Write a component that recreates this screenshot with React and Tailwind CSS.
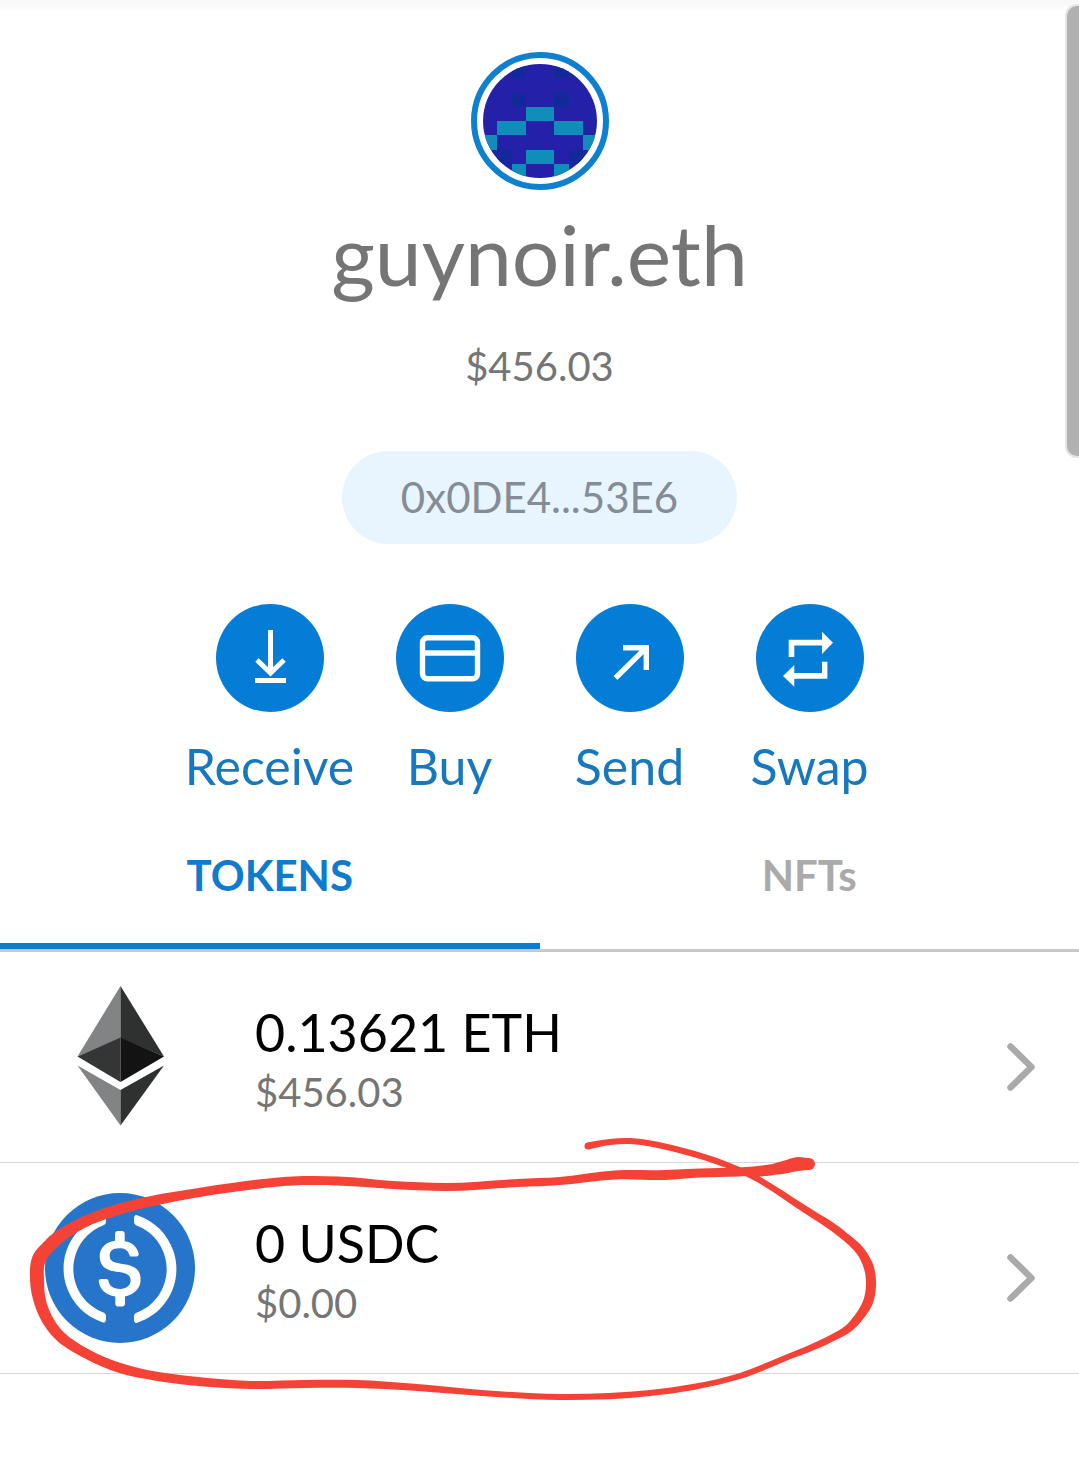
import React, { useState } from "react";

const AVATAR_CELLS = [
  { x: 2, y: 0, fill: "#12299b" },
  { x: 5, y: 0, fill: "#12299b" },
  { x: 2, y: 2, fill: "#12299b" },
  { x: 5, y: 2, fill: "#12299b" },
  { x: 3, y: 3, w: 2, fill: "#118db9" },
  { x: 1, y: 4, w: 2, fill: "#118db9" },
  { x: 5, y: 4, w: 2, fill: "#118db9" },
  { x: 0, y: 5, fill: "#118db9" },
  { x: 7, y: 5, fill: "#118db9" },
  { x: 3, y: 6, w: 2, fill: "#118db9" },
  { x: 1, y: 6, fill: "#12299b" },
  { x: 6, y: 6, fill: "#12299b" },
  { x: 2, y: 7, fill: "#118db9" },
  { x: 5, y: 7, fill: "#118db9" },
];

// x, y and thickness of the pen along the marker line
const MARKER = [
  [809, 1164, 12], [798, 1164, 14], [785, 1167, 13], [770, 1170, 11], [738, 1172, 9],
  [700, 1173, 9], [665, 1175, 10], [615, 1175, 9], [560, 1181, 8], [518, 1183, 8],
  [446, 1187, 8], [393, 1185, 8], [338, 1181, 9], [293, 1181, 9], [236, 1187, 9],
  [196, 1193, 9], [152, 1201, 10], [110, 1212, 11], [82, 1223, 11], [50, 1245, 13],
  [39, 1259, 14], [37, 1280, 14], [41, 1305, 12], [56, 1332, 11],
  [87, 1354, 10], [120, 1368, 10], [155, 1376, 9], [193, 1381, 9],
  [250, 1385, 8], [304, 1384, 8], [357, 1384, 8], [411, 1387, 7], [482, 1393, 6],
  [560, 1397, 6], [650, 1393, 6], [693, 1387, 6],
  [740, 1376, 6], [783, 1359, 6], [830, 1339, 7], [849, 1328, 8], [859, 1317, 9],
  [868, 1302, 10], [871, 1285, 10], [869, 1268, 10], [861, 1252, 9], [843, 1235, 8],
  [803, 1208, 7], [750, 1175, 6], [727, 1165, 6], [683, 1151, 6], [653, 1144, 6],
  [630, 1141, 6], [610, 1142, 6], [588, 1146, 7],
];

const distance = (a, b) => Math.hypot(b[0] - a[0], b[1] - a[1]);

// direction of the line at every point, as a unit vector
const directions = (pts) =>
  pts.map((p, i) => {
    const a = pts[i - 1] || p;
    const b = pts[i + 1] || p;
    const before = distance(a, p) || 1;
    const after = distance(p, b) || 1;
    const dx = ((p[0] - a[0]) / before) * after + ((b[0] - p[0]) / after) * before;
    const dy = ((p[1] - a[1]) / before) * after + ((b[1] - p[1]) / after) * before;
    const len = Math.hypot(dx, dy);
    return [dx / len, dy / len];
  });

const curve = (pts, dirs) =>
  pts.slice(0, -1).map((p, i) => {
    const b = pts[i + 1];
    const k = distance(p, b) / 3;
    return `C${p[0] + dirs[i][0] * k} ${p[1] + dirs[i][1] * k} ${b[0] - dirs[i + 1][0] * k} ${b[1] - dirs[i + 1][1] * k} ${b[0]} ${b[1]}`;
  }).join("");

const ribbon = (pts) => {
  const dirs = directions(pts);
  const side = (half) =>
    pts.map(([x, y, w], i) => [x - dirs[i][1] * w * half, y + dirs[i][0] * w * half]);
  const left = side(0.5);
  const right = side(-0.5).reverse();
  const back = dirs.map(([x, y]) => [-x, -y]).reverse();
  return `M${left[0].join(" ")}${curve(left, dirs)}L${right[0].join(" ")}${curve(right, back)}Z`;
};

const Avatar = () => (
  <div className="size-[138px] rounded-full border-6 border-[#0f7fd0] p-[6px]">
    <svg viewBox="0 0 8 8" className="size-full rounded-full bg-[#2420a8]" shapeRendering="crispEdges">
      {AVATAR_CELLS.map((c, i) => (
        <rect key={i} x={c.x} y={c.y} width={c.w || 1} height="1" fill={c.fill} />
      ))}
    </svg>
  </div>
);

const ReceiveIcon = () => (
  <svg viewBox="0 0 108 108" className="size-full" fill="none" stroke="white" strokeWidth="5">
    <path d="M54.5 26V69M41 56L54.5 69L68 56M39 76.5H70" />
  </svg>
);

const BuyIcon = () => (
  <svg viewBox="0 0 108 108" className="size-full" fill="none" stroke="white" strokeWidth="5.4">
    <rect x="26.5" y="33.7" width="55" height="41" rx="5" />
    <path d="M26 49H82" />
  </svg>
);

const SendIcon = () => (
  <svg viewBox="0 0 108 108" className="size-full" fill="none" stroke="white" strokeWidth="5.4">
    <path d="M47 43.7H70.3V66M39.5 74L70.3 43.7" />
  </svg>
);

const SwapIcon = () => (
  <svg viewBox="0 0 108 108" className="size-full" fill="white">
    <path d="M32.7 53V35.8H66V27.7L77 38.7L66 50V41.6H38.3V53ZM71.4 57.7V74.7H38.3V82.7L27 72L38.3 61V69H66V57.7Z" />
  </svg>
);

const EthIcon = () => (
  <svg viewBox="45 982 150 150" className="size-[150px] shrink-0">
    <path fill="#828384" d="M120.5 986V1038L77.5 1056.5Z" />
    <path fill="#2f3030" d="M120.5 986V1038L164 1056.5Z" />
    <path fill="#343535" d="M120.5 1037.5V1082L77.5 1056.5Z" />
    <path fill="#131313" d="M120.5 1037.5V1082L164 1056.5Z" />
    <path fill="#828384" d="M120.5 1090V1125.5L77.5 1065.5Z" />
    <path fill="#2f3030" d="M120.5 1090V1125.5L164 1065.5Z" />
  </svg>
);

const UsdcIcon = () => (
  <svg viewBox="0 0 2000 2000" className="size-[150px] shrink-0">
    <circle cx="1000" cy="1000" r="1000" fill="#2775ca" />
    <path fill="white" d="M1275 1158.33c0-145.83-87.5-195.83-262.5-216.66-125-16.67-150-50-150-108.34s41.67-95.83 125-95.83c75 0 116.67 25 137.5 87.5 4.17 12.5 16.67 20.83 29.17 20.83h66.66c16.67 0 29.17-12.5 29.17-29.16v-4.17c-16.67-91.67-91.67-162.5-187.5-170.83v-100c0-16.67-12.5-29.17-33.33-33.34h-62.5c-16.67 0-29.17 12.5-33.34 33.34v95.83c-125 16.67-204.16 100-204.16 204.17 0 137.5 83.33 191.66 258.33 212.5 116.67 20.83 154.17 45.83 154.17 112.5s-58.34 112.5-137.5 112.5c-108.34 0-145.84-45.84-158.34-108.34-4.16-16.66-16.66-25-29.16-25h-70.84c-16.66 0-29.16 12.5-29.16 29.17v4.17c16.66 104.16 83.33 179.16 220.83 200v100c0 16.66 12.5 29.16 33.33 33.33h62.5c16.67 0 29.17-12.5 33.34-33.33v-100c125-20.84 208.33-108.34 208.33-220.84z" />
    <path fill="white" d="M787.5 1595.83c-325-116.66-491.67-479.16-370.83-800 62.5-175 200-308.33 370.83-370.83 16.67-8.33 25-20.83 25-41.67V325c0-16.67-8.33-29.17-25-33.33-4.17 0-12.5 0-16.67 4.16-395.83 125-612.5 545.84-487.5 941.67 75 233.33 254.17 412.5 487.5 487.5 16.67 8.33 33.34 0 37.5-16.67 4.17-4.16 4.17-8.33 4.17-16.66v-58.34c0-12.5-12.5-29.16-25-37.5zM1229.17 295.83c-16.67-8.33-33.34 0-37.5 16.67-4.17 4.17-4.17 8.33-4.17 16.67v58.33c0 16.67 12.5 33.33 25 41.67 325 116.66 491.67 479.16 370.83 800-62.5 175-200 308.33-370.83 370.83-16.67 8.33-25 20.83-25 41.67V1700c0 16.67 8.33 29.17 25 33.33 4.17 0 12.5 0 16.67-4.16 395.83-125 612.5-545.84 487.5-941.67-75-237.5-258.34-416.67-487.5-491.67z" />
  </svg>
);

const Chevron = () => (
  <svg viewBox="0 0 28 48" className="mt-5 h-12 w-7 shrink-0" fill="none" stroke="#aaaaaa" strokeWidth="6.5" strokeLinecap="round" strokeLinejoin="round">
    <path d="M3.5 3.5L24.5 24L3.5 44.5" />
  </svg>
);

const Marker = () => (
  <svg viewBox="0 1133 900 270" className="pointer-events-none absolute -top-[30px] left-0 h-[270px] w-[900px]" fill="#f44336">
    <path d={ribbon(MARKER)} />
    <circle cx="809" cy="1164" r="6" />
    <circle cx="588" cy="1146" r="3.5" />
  </svg>
);

const ACTIONS = [
  { label: "Receive", icon: <ReceiveIcon /> },
  { label: "Buy", icon: <BuyIcon /> },
  { label: "Send", icon: <SendIcon /> },
  { label: "Swap", icon: <SwapIcon /> },
];

const ASSETS = [
  { id: "eth", amount: "0.13621 ETH", value: "$456.03", icon: <EthIcon /> },
  { id: "usdc", amount: "0 USDC", value: "$0.00", icon: <UsdcIcon />, marked: true },
];

const App = () => {
  const [tab, setTab] = useState("TOKENS");

  return (
    <div className="relative min-h-screen overflow-hidden bg-white font-['Lato',sans-serif]">
      <div className="absolute inset-x-0 top-0 h-3 bg-gradient-to-b from-[#f7f7f7] to-white" />
      <div className="absolute top-1 right-0 h-[454px] w-[14px] rounded-l-xl border-2 border-r-0 border-[#e5e5e5] bg-[#b1b1b1]" />

      <header className="relative flex flex-col items-center pt-[52px]">
        <Avatar />
        <h1 className="mt-4 text-[84px] leading-[96px] text-[#757575]">guynoir.eth</h1>
        <p className="mt-9 text-[40px] leading-[56px] text-[#757575]">$456.03</p>
        <button className="mt-[57px] h-[93px] rounded-full bg-[#e8f5ff] px-[59px] text-[42px] text-[#848c96]">
          0x0DE4...53E6
        </button>
      </header>

      <nav className="mt-[60px] flex justify-center">
        {ACTIONS.map((a) => (
          <button key={a.label} className="flex w-[180px] flex-col items-center text-[#1878be]">
            <span className="size-[108px] rounded-full bg-[#037dd6]">{a.icon}</span>
            <span className="mt-6 text-[50px] leading-[60px]">{a.label}</span>
          </button>
        ))}
      </nav>

      <div role="tablist" className="mt-6 flex border-b-3 border-[#c8c8c8]">
        {["TOKENS", "NFTs"].map((name) => (
          <button
            key={name}
            role="tab"
            aria-selected={tab === name}
            onClick={() => setTab(name)}
            className={`h-[129px] flex-1 border-b-6 pb-3 text-[42px] font-bold ${
              tab === name ? "border-[#0f7bcf] text-[#0f7bcf]" : "border-transparent text-[#aaaaaa]"
            }`}
          >
            {name}
          </button>
        ))}
      </div>

      <ul>
        {ASSETS.map((asset) => (
          <li key={asset.id} className="relative border-b border-[#d6d6d6]">
            <button className="flex w-full items-center py-[30px] pr-11 pl-[45px] text-left">
              {asset.icon}
              <span className="ml-[60px] flex flex-1 flex-col pt-1">
                <span className="text-[52px] leading-[66px] text-black">{asset.amount}</span>
                <span className="text-[40px] leading-[54px] text-[#757575]">{asset.value}</span>
              </span>
              <Chevron />
            </button>
            {asset.marked && <Marker />}
          </li>
        ))}
      </ul>
    </div>
  );
};

export default App;
